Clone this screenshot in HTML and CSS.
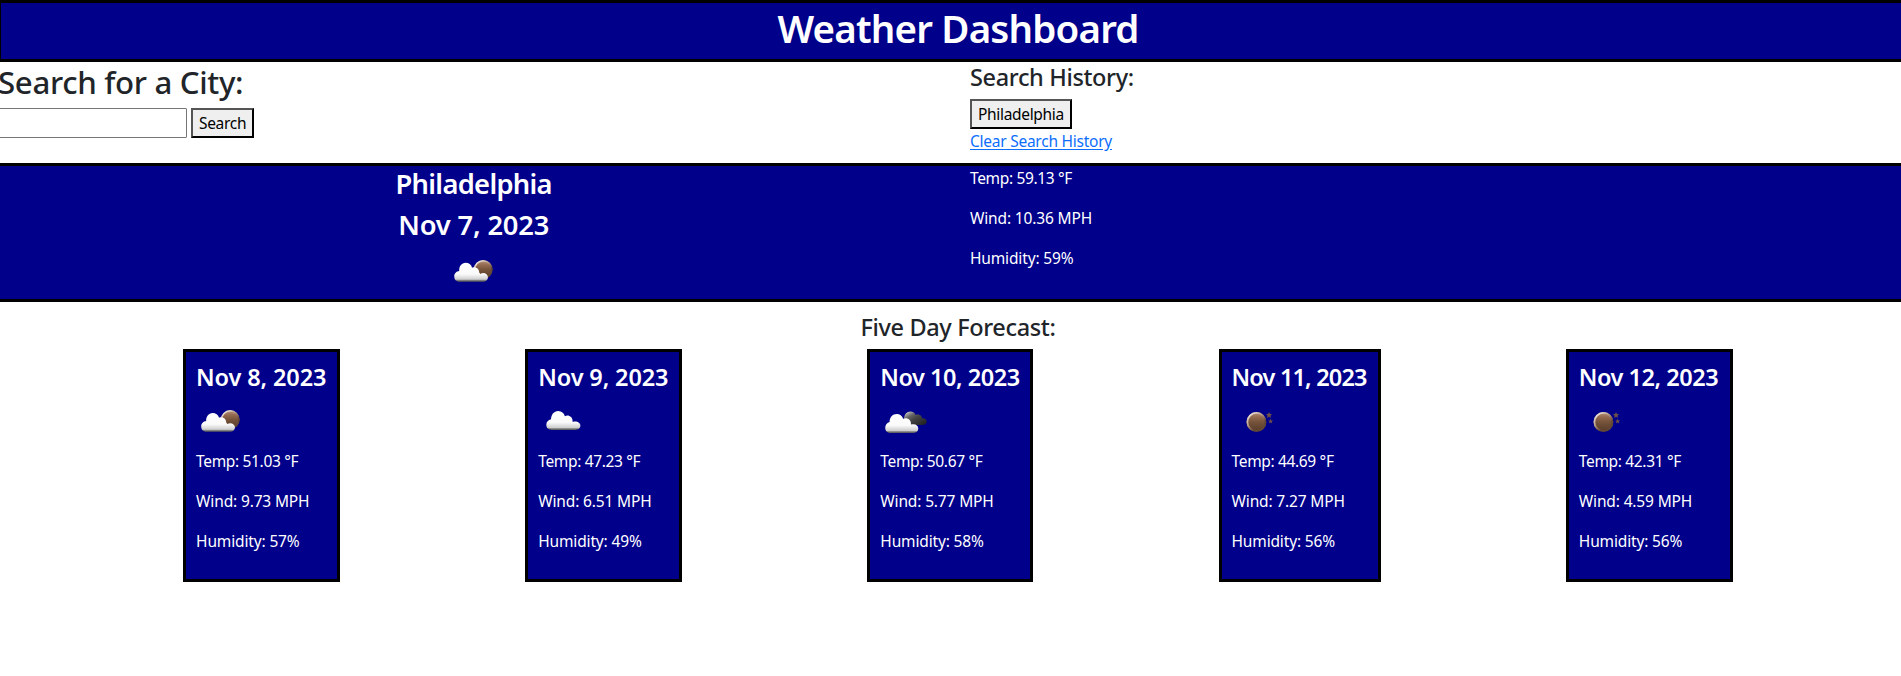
FILE: index.html
```html
<!DOCTYPE html>
<html lang="en">
<head>
<meta charset="utf-8">
<title>Weather Dashboard</title>
<link rel="stylesheet" href="styles.css">
</head>
<body>
<svg class="defs" width="0" height="0" aria-hidden="true">
  <defs>
    <linearGradient id="cloud" x1="0" y1="0" x2="0" y2="1">
      <stop offset="0" stop-color="#fff"/><stop offset=".6" stop-color="#fafafa"/>
      <stop offset=".87" stop-color="#cfcfcf"/><stop offset=".94" stop-color="#777"/><stop offset="1" stop-color="#555"/>
    </linearGradient>
    <linearGradient id="dark" x1="0" y1="0" x2="1" y2="1">
      <stop offset="0" stop-color="#eee"/><stop offset=".3" stop-color="#666"/><stop offset=".5" stop-color="#444"/><stop offset="1" stop-color="#1c1c1c"/>
    </linearGradient>
    <linearGradient id="moon" x1="0" y1="0" x2="0" y2="1">
      <stop offset="0" stop-color="#b8947c"/><stop offset=".25" stop-color="#946b50"/>
      <stop offset=".5" stop-color="#76533b"/><stop offset="1" stop-color="#553b27"/>
    </linearGradient>
    <linearGradient id="rim" x1="0" y1="0" x2=".8" y2="1">
      <stop offset="0" stop-color="#fff"/><stop offset=".45" stop-color="#b39685"/><stop offset=".75" stop-color="#634736"/>
    </linearGradient>
    <symbol id="few" viewBox="0 0 50 50">
      <circle cx="34.2" cy="20.6" r="9.3" fill="url(#moon)"/>
      <circle cx="34.2" cy="20.6" r="8.7" fill="none" stroke="url(#rim)" stroke-width="1.6"/>
      <path fill="url(#cloud)" d="M10.5 32.8C7 32.8 5.2 30.3 5.2 27.5C5.2 24.6 7.4 22.3 10.2 22.1C9.8 17.6 12.6 13.9 16.6 13.9C19.7 13.9 22.3 15.8 23.1 18.8C26.5 17.3 30.2 19.6 30.3 23.8C30.8 24.2 31 24.6 31.2 25C34.8 22.9 38.9 24.9 39 28.3C39 31 37 32.8 34 32.8Z"/>
    </symbol>
    <symbol id="scattered" viewBox="0 0 50 50">
      <path fill="url(#cloud)" d="M14 31C10.3 31 8.3 28.6 8.3 25.8C8.3 22.9 10.3 20.7 13 20.2C13.2 15.6 16 12 20.2 12C23.6 12 26 14.2 26.9 17.2C30.6 15.4 34.6 18 34.6 22.1L34.7 22.9C38.6 21.6 42.4 23.5 42.4 26.6C42.4 29.2 40.2 31 37.5 31Z"/>
    </symbol>
    <symbol id="broken" viewBox="0 0 50 50">
      <path fill="url(#dark)" d="M24 20C24 15.4 26.6 12.4 30.5 12.4C33.2 12.4 35 13.7 35.6 16C38.8 14.6 41.8 16.4 42.2 19.4C44.8 19 46.7 20.4 46.7 22.5C46.7 24.7 45 26 42.5 26H28Z"/>
      <path fill="url(#cloud)" d="M10.5 34C7 34 5.2 31.5 5.2 28.7C5.2 25.8 7.2 23.6 9.6 23C9.4 18.4 12.6 14.9 16.8 14.9C19.8 14.9 22.3 16.8 23.1 19.8C26.8 18 31 20.4 31 24.7L31.2 25.6C34.8 24.4 38.3 26.2 38.3 29.6C38.3 32.2 36.3 34 33.8 34Z"/>
    </symbol>
    <symbol id="clear" viewBox="0 0 50 50">
      <circle cx="24.4" cy="22.9" r="9.9" fill="url(#moon)"/>
      <circle cx="24.4" cy="22.9" r="9" fill="none" stroke="url(#rim)" stroke-width="1.8"/>
      <path fill="#6e5048" d="M37 12.9L37.9 15L40.1 15.2L38.4 16.7L39 18.9L37 17.7L35 18.9L35.6 16.7L33.9 15.2L36.1 15ZM38.6 19.7L39.3 21.4L41.1 21.5L39.7 22.7L40.2 24.6L38.6 23.6L37 24.6L37.5 22.7L36.1 21.5L37.9 21.4Z"/>
    </symbol>
  </defs>
</svg>
<div class="page">
  <header class="banner"><h1>Weather Dashboard</h1></header>
  <main>
    <section class="search">
      <div class="col-main">
        <h2>Search for a City:</h2>
        <form class="search-form">
          <input type="text" aria-label="City">
          <button type="button">Search</button>
        </form>
      </div>
      <div class="col-side">
        <h4>Search History:</h4>
        <button type="button">Philadelphia</button>
        <a class="clear-link" href="#">Clear Search History</a>
      </div>
    </section>
    <section class="current">
      <div class="col-main current-place">
        <h3 class="city">Philadelphia</h3>
        <h3>Nov 7, 2023</h3>
        <svg class="icon"><use href="#few"/></svg>
      </div>
      <div class="col-side">
        <p class="temp">Temp: 59.13 °F</p>
        <p>Wind: 10.36 MPH</p>
        <p>Humidity: 59%</p>
      </div>
    </section>
    <h4 class="forecast-title">Five Day Forecast:</h4>
    <section class="forecast">
      <article class="card">
        <h4>Nov 8, 2023</h4>
        <svg class="icon"><use href="#few"/></svg>
        <p class="temp">Temp: 51.03 °F</p>
        <p>Wind: 9.73 MPH</p>
        <p>Humidity: 57%</p>
      </article>
      <article class="card">
        <h4>Nov 9, 2023</h4>
        <svg class="icon"><use href="#scattered"/></svg>
        <p class="temp">Temp: 47.23 °F</p>
        <p>Wind: 6.51 MPH</p>
        <p>Humidity: 49%</p>
      </article>
      <article class="card card-wide">
        <h4>Nov 10, 2023</h4>
        <svg class="icon"><use href="#broken"/></svg>
        <p class="temp">Temp: 50.67 °F</p>
        <p>Wind: 5.77 MPH</p>
        <p>Humidity: 58%</p>
      </article>
      <article class="card card-narrow">
        <h4>Nov 11, 2023</h4>
        <svg class="icon"><use href="#clear"/></svg>
        <p class="temp">Temp: 44.69 °F</p>
        <p>Wind: 7.27 MPH</p>
        <p>Humidity: 56%</p>
      </article>
      <article class="card card-wide card-last">
        <h4>Nov 12, 2023</h4>
        <svg class="icon"><use href="#clear"/></svg>
        <p class="temp">Temp: 42.31 °F</p>
        <p>Wind: 4.59 MPH</p>
        <p>Humidity: 56%</p>
      </article>
    </section>
  </main>
</div>
</body>
</html>
```
FILE: styles.css
```css
*, *::before, *::after { box-sizing: border-box; }

body {
  margin: 0;
  overflow: hidden;
  background: #fff;
  color: #212529;
  font: 400 15.5px/24px "Noto Sans", "Open Sans", sans-serif;
}

h1, h2, h3, h4 { margin: 0 0 7px; padding-top: 1px; font-weight: 500; white-space: nowrap; }
h1 { font-size: 38.5px; line-height: 48px; font-weight: 600; letter-spacing: -.82px; }
h2 { font-size: 31.2px; line-height: 38.4px; letter-spacing: -.32px; }
h3 { margin-bottom: 7.4px; padding-top: .6px; font-size: 27.3px; line-height: 33.6px; font-weight: 600; letter-spacing: -.15px; }
h4 { font-size: 23.5px; line-height: 28.8px; letter-spacing: -.36px; }
p { margin: 0 0 16px; letter-spacing: -.15px; white-space: nowrap; }

.defs { position: absolute; }
.page { width: 1920px; margin-left: -2px; }
.icon { display: block; width: 50px; height: 50px; }
.temp { letter-spacing: -.34px; }

.banner {
  height: 62px;
  border: 3px solid #000;
  background: #00008b;
  color: #fff;
  text-align: center;
}

.col-main { width: 972px; }
.col-side { flex: 1; }

.search { display: flex; height: 101px; }
.search-form { display: flex; gap: 4px; }

input {
  width: 189px;
  height: 30px;
  border: 1px solid #767676;
  border-radius: 1px;
  background: #fff;
  font: inherit;
}

button {
  display: block;
  height: 30px;
  padding: 1px 6px;
  border: 2px solid;
  border-color: #555 #000 #000 #555;
  background: #efefef;
  color: #000;
  font: inherit;
  letter-spacing: -.32px;
}

.clear-link { color: #0d6efd; letter-spacing: -.25px; text-underline-offset: 2px; }

.current {
  display: flex;
  height: 139px;
  border-top: 3px solid #000;
  border-bottom: 3px solid #000;
  background: #00008b;
  color: #fff;
}
.current-place { display: flex; flex-direction: column; align-items: center; padding-right: 20.6px; }
.city { letter-spacing: -.68px; }

.forecast-title { margin-top: 10px; text-align: center; }
.forecast { display: flex; justify-content: space-evenly; }

.card {
  width: 157px;
  height: 233px;
  padding: 10px;
  border: 3px solid #000;
  background: #00008b;
  color: #fff;
}
.card h4 { font-weight: 600; letter-spacing: -.12px; }
.card-wide { width: 166.1px; }
.card-wide h4 { letter-spacing: -.46px; }
.card-narrow { width: 162.2px; }
.card-narrow h4 { letter-spacing: -.82px; }
.card-last { width: 167px; }
```
